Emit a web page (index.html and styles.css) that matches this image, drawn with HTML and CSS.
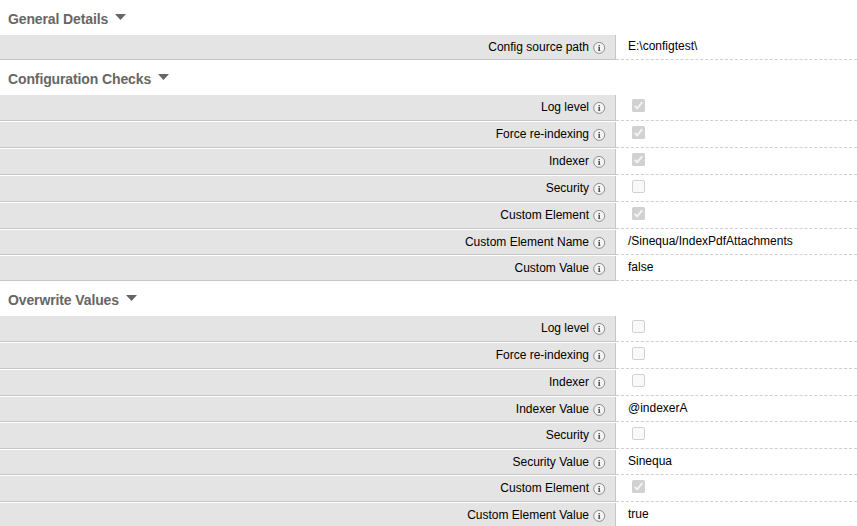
FILE: index.html
```
<!DOCTYPE html>
<html lang="en">
<head>
<meta charset="utf-8">
<title>Configuration</title>
<link rel="stylesheet" href="styles.css">
</head>
<body>
<svg class="defs" width="0" height="0" aria-hidden="true">
<symbol id="info" viewBox="0 0 13 13"><circle cx="6.2" cy="6.9" r="5.5" fill="#f4f4f4" stroke="#858585" stroke-width=".9"/><path d="M5.5 4h1.5v1.3H5.5zM5 6h2v3.5h.6v.5H5v-.5h.5v-3H5z" fill="#555"/></symbol>
</svg>
<main id="form"></main>
<script src="app.js"></script>
</body>
</html>
```
FILE: styles.css
```
body { margin: 0; height: 526px; overflow: hidden; background: #fff; color: #000; font: 12px/14px "Liberation Sans", Arial, sans-serif; }
.defs { display: block; width: 0; height: 0; }
.heading { margin: 0; height: 35px; box-sizing: border-box; padding: 11px 0 0 8px; display: flex; align-items: flex-start; font-size: 14px; line-height: 16px; font-weight: bold; letter-spacing: -.12px; color: #666; }
.arrow { width: 11px; height: 6px; margin: 3px 0 0 7px; }
.row { display: grid; grid-template-columns: 616px 1fr; height: 27px; }
.row.short { height: 26px; }
.row.first { height: 26px; }
.row.single { height: 25px; }
.label { box-sizing: border-box; margin-top: 1px; border-right: 1px solid #c6c6c6; border-bottom: 1px solid #c6c6c6; background: #e4e4e4; padding: 5px 9px 0 0; display: flex; justify-content: flex-end; align-items: flex-start; }
.first .label, .single .label { margin-top: 0; }
.info { width: 13px; height: 13px; margin: 1px 0 0 4px; }
.value { box-sizing: border-box; border-bottom: 1px dashed #d0d0d0; padding: 5px 0 0 12px; }
.first .value, .single .value { padding-top: 4px; }
.check { display: block; width: 13px; height: 13px; margin-left: 4px; }
```
FILE: app.js
```
const sections = [
  ["General Details", [["Config source path", "E:\\configtest\\", "single"]]],
  ["Configuration Checks", [
    ["Log level", true, "first"], ["Force re-indexing", true], ["Indexer", true],
    ["Security", false], ["Custom Element", true],
    ["Custom Element Name", "/Sinequa/IndexPdfAttachments", "short"], ["Custom Value", "false", "short"]]],
  ["Overwrite Values", [
    ["Log level", false, "first"], ["Force re-indexing", false], ["Indexer", false],
    ["Indexer Value", "@indexerA", "short"], ["Security", false],
    ["Security Value", "Sinequa", "short"], ["Custom Element", true], ["Custom Element Value", "true"]]]
];
const box = on => on
  ? '<svg class="check" viewBox="0 0 13 13"><rect width="13" height="13" rx="1.5" fill="#d1d1d1"/><path d="M2.7 6.8l2.5 2.6L10.3 3.2" fill="none" stroke="#f4f4f4" stroke-width="1.9"/></svg>'
  : '<svg class="check" viewBox="0 0 13 13"><rect x=".5" y=".5" width="12" height="12" rx="1.5" fill="#f9f9f9" stroke="#d1d1d1"/></svg>';
document.getElementById("form").innerHTML = sections.map(([title, rows]) =>
  `<section><h2 class="heading">${title}<svg class="arrow" viewBox="0 0 11 6"><path d="M0 0h11L5.5 6z" fill="#666"/></svg></h2>` +
  rows.map(([name, value, kind = ""]) =>
    `<div class="row ${kind}"><div class="label">${name}<svg class="info"><use href="#info"/></svg></div><div class="value">${typeof value === "string" ? value : box(value)}</div></div>`
  ).join("") + "</section>").join("");
```
